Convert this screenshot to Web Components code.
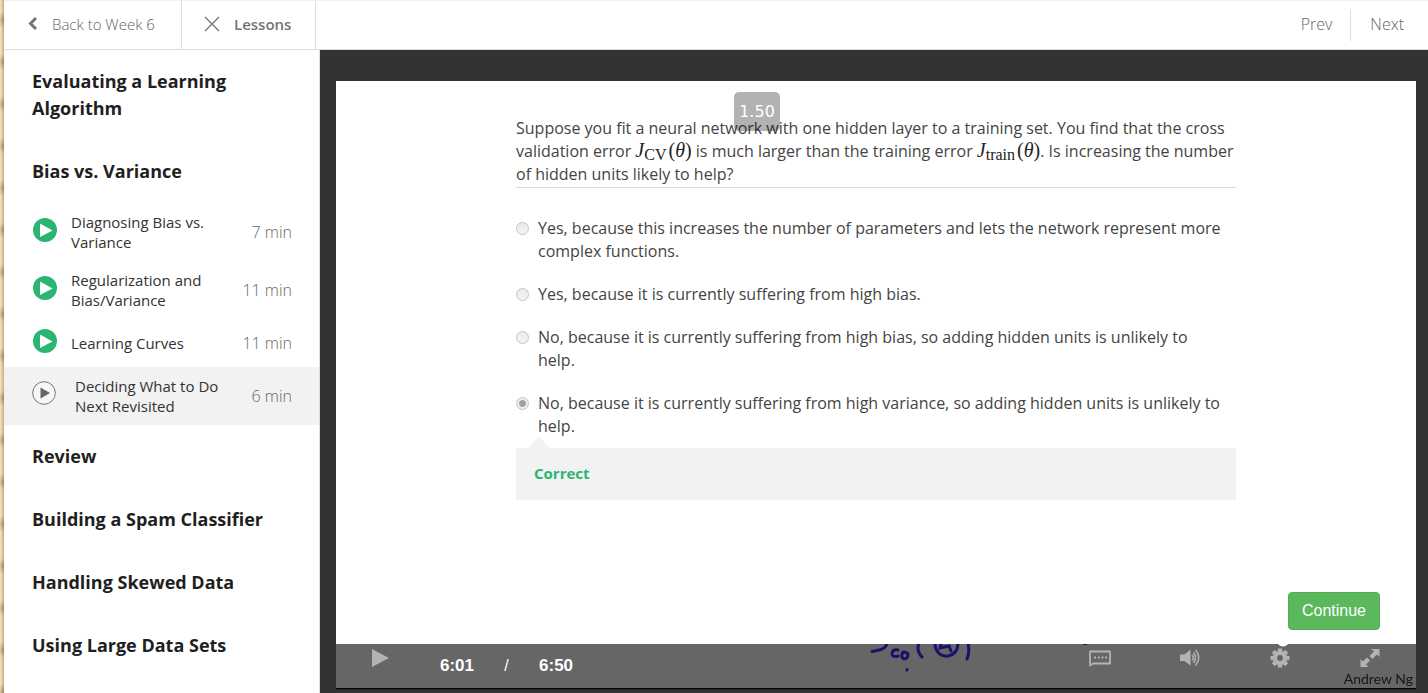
<!DOCTYPE html>
<html lang="en">
<head>
<meta charset="utf-8">
<title>Deciding What to Do Next Revisited</title>
<style>
html, body { margin: 0; height: 100%; }
body { font-family: "Open Sans", "Noto Sans", sans-serif; background: #fff; }
</style>
</head>
<body>
<course-page>
  <top-bar slot="header"></top-bar>
  <nav slot="sidebar" aria-label="Lessons">
    <lesson-section heading="Evaluating a Learning Algorithm"></lesson-section>
    <lesson-section heading="Bias vs. Variance">
      <lesson-item minutes="7 min">Diagnosing Bias vs. Variance</lesson-item>
      <lesson-item minutes="11 min">Regularization and Bias/Variance</lesson-item>
      <lesson-item minutes="11 min">Learning Curves</lesson-item>
      <lesson-item minutes="6 min" current>Deciding What to Do Next Revisited</lesson-item>
    </lesson-section>
    <lesson-section heading="Review"></lesson-section>
    <lesson-section heading="Building a Spam Classifier"></lesson-section>
    <lesson-section heading="Handling Skewed Data"></lesson-section>
    <lesson-section heading="Using Large Data Sets"></lesson-section>
  </nav>
  <video-stage slot="main">
    <quiz-panel></quiz-panel>
    <player-controls slot="controls"></player-controls>
  </video-stage>
</course-page>

<script>
const define = (name, html, setup) => {
  customElements.define(name, class extends HTMLElement {
    constructor() {
      super();
      this.attachShadow({ mode: "open" }).innerHTML = html;
    }
    connectedCallback() {
      if (setup) setup(this, this.shadowRoot);
    }
  });
};

define("course-page", `
<style>
  :host { display: grid; grid-template-columns: 4px 1fr; min-height: 100vh; }
  .edge {
    background:
      linear-gradient(90deg, rgba(255,240,215,.6), rgba(120,95,50,.35)),
      repeating-linear-gradient(180deg, #f2d8ae 0 12px, #a58e62 20px, #f0d5aa 28px 42px);
  }
  .page { display: flex; flex-direction: column; min-width: 0; }
  .body { flex: 1; display: grid; grid-template-columns: 316px minmax(0, 1fr); }
  .side { box-sizing: border-box; border-right: 1px solid #ddd; background: #fff; }
  .main { display: flex; background: #333; }
  ::slotted([slot=main]) { flex: 1; min-width: 0; }
</style>
<div class="edge"></div>
<div class="page">
  <slot name="header"></slot>
  <div class="body">
    <div class="side"><slot name="sidebar"></slot></div>
    <div class="main"><slot name="main"></slot></div>
  </div>
</div>`);

define("top-bar", `
<style>
  :host { display: flex; box-sizing: border-box; height: 50px; border-top: 1px solid #f0f0f0; border-bottom: 1px solid #ddd; background: #fff; font-size: 15px; line-height: 20px; }
  a, button { display: flex; align-items: center; box-sizing: border-box; padding: 0 0 2px; color: #666; text-decoration: none; font: inherit; font-weight: 300; }
  .back { width: 178px; padding-left: 24px; gap: 14px; border-right: 1px solid #ddd; }
  button { width: 134px; padding-left: 22px; gap: 14px; background: none; border: 0; border-right: 1px solid #ddd; color: #757575; font-weight: 600; }
  .pager { margin-left: auto; display: flex; align-items: center; padding-right: 24px; }
  .pager a { font-size: 16px; }
  .pager i { width: 1px; height: 32px; background: #ddd; margin: 0 19px 0 18px; }
  svg { display: block; }
</style>
<a class="back" href="#week6">
  <svg width="10" height="16" viewBox="0 0 10 16"><path d="M8 2 2.500 7.500 8 13" fill="none" stroke="#757575" stroke-width="3"/></svg>
  <span>Back to Week 6</span>
</a>
<button type="button">
  <svg width="16" height="16" viewBox="0 0 16 16"><path d="M1 1 15 15M15 1 1 15" fill="none" stroke="#757575" stroke-width="1.300"/></svg>
  <span>Lessons</span>
</button>
<div class="pager"><a href="#prev">Prev</a><i></i><a href="#next">Next</a></div>`);

define("lesson-section", `
<style>
  :host { display: block; }
  h2 { margin: 0; padding: 18px 40px 18px 28px; font-size: 18px; line-height: 27px; font-weight: 700; color: #1f1f1f; }
</style>
<h2></h2><slot></slot>`,
(host, root) => { root.querySelector("h2").textContent = host.getAttribute("heading"); });

define("lesson-item", `
<style>
  :host { display: block; }
  a { display: flex; align-items: center; min-height: 30px; padding: 9px 27px 9px 29px; font-size: 15px; line-height: 20px; color: #333; text-decoration: none; }
  :host([current]) a { background: #f2f2f2; padding-left: 28px; }
  svg { flex: none; width: 24px; height: 24px; padding-bottom: 4px; margin-right: 14px; }
  :host([current]) svg { margin-right: 19px; padding-bottom: 6px; }
  .title { width: 146px; }
  .time { margin-left: auto; color: #666; font-size: 16px; font-weight: 300; white-space: nowrap; }
  :host([current]) .done, :host(:not([current])) .now { display: none; }
</style>
<a href="#lesson">
  <svg class="done" viewBox="0 0 24 24"><circle cx="12" cy="12" r="12" fill="#2ab573"/><path d="M7 5.500V19L19.500 12.500z" fill="#fff"/></svg>
  <svg class="now" viewBox="0 0 24 24"><circle cx="12" cy="12" r="11.300" fill="#f7f7f7" stroke="#757575"/><path d="M8.500 6.500V17.500L18 12z" fill="#666"/></svg>
  <span class="title"><slot></slot></span>
  <span class="time"></span>
</a>`,
(host, root) => { root.querySelector(".time").textContent = host.getAttribute("minutes"); });

define("video-stage", `
<style>
  :host { display: flex; flex-direction: column; box-sizing: border-box; padding: 31px 12px 0 16px; }
  ::slotted(quiz-panel) { flex: 1; }
  .foot { height: 4px; border-top: 1px solid #000; background: linear-gradient(#2a2a2a, #383838); }
</style>
<slot></slot>
<slot name="controls"></slot>
<div class="foot"></div>`);

define("math-term", `
<style>
  :host { font-family: "Liberation Serif", serif; font-size: 20px; line-height: 0; color: #222; white-space: nowrap; }
  sub { margin-right: 2px; font-size: 16px; line-height: 0; vertical-align: -3px; }
</style>
<i>J</i><sub><slot></slot></sub>(<i>θ</i>)`);

define("quiz-panel", `
<style>
  :host { display: flex; flex-direction: column; position: relative; box-sizing: border-box; padding: 36px 36px 14px; background: #fff; color: #444; font-size: 16px; line-height: 23px; }
  form { display: contents; }
  fieldset { width: 100%; max-width: 720px; min-width: 0; margin: 0 auto; padding: 0; border: 0; }
  .question { padding: 0 0 1px; border-bottom: 1px solid #ddd; margin-bottom: 29px; }
  .options { display: flex; flex-direction: column; gap: 20px; }
  label { display: flex; gap: 9px; padding-right: 12px; }
  input { appearance: none; flex: none; box-sizing: border-box; width: 13px; height: 13px; margin: 5px 0 0; border: 1px solid #c4c4c4; border-radius: 50%; background: linear-gradient(#eaeaea, #f4f4f4); }
  input:checked { background: radial-gradient(circle, #a2a2a2 0 3px, #efefef 4px); }
  .feedback { position: relative; margin-top: 10px; padding: 14px 18px 15px; background: #f2f2f2; color: #2ab573; font-size: 15px; font-weight: 700; }
  .feedback::before { content: ""; position: absolute; left: 12px; top: -11px; border: 11px solid transparent; border-top: 0; border-bottom-color: #f2f2f2; }
  button { align-self: flex-end; margin-top: auto; height: 38px; padding: 0 13px; border: 1px solid #54ae54; border-radius: 4px; background: #5cb85c; color: #fff; font: 16px "Liberation Sans", sans-serif; }
  .speed { position: absolute; top: 11px; left: calc(50% - 142px); box-sizing: border-box; width: 46px; height: 39px; border-radius: 5px; background: rgba(0,0,0,.3); color: #fff; text-align: center; font: 16px/39px "DejaVu Sans", sans-serif; }
</style>
<form>
  <fieldset>
    <div class="question">Suppose you fit a neural network with one hidden layer to a training set. You find that the cross validation error <math-term>CV</math-term> is much larger than the training error <math-term>train</math-term>. Is increasing the number of hidden units likely to help?</div>
    <div class="options">
      <label><input type="radio" name="answer" disabled><span>Yes, because this increases the number of parameters and lets the network represent more complex functions.</span></label>
      <label><input type="radio" name="answer" disabled><span>Yes, because it is currently suffering from high bias.</span></label>
      <label><input type="radio" name="answer" disabled><span>No, because it is currently suffering from high bias, so adding hidden units is unlikely to help.</span></label>
      <label><input type="radio" name="answer" disabled checked><span>No, because it is currently suffering from high variance, so adding hidden units is unlikely to help.</span></label>
    </div>
    <div class="feedback">Correct</div>
  </fieldset>
  <button type="button">Continue</button>
</form>
<div class="speed">1.50</div>`);

define("player-controls", `
<style>
  :host { display: flex; position: relative; box-sizing: border-box; height: 44px; padding-right: 1px; background: #666; color: #fff; font: bold 17px/20px "Liberation Sans", sans-serif; overflow: hidden; }
  button { width: 90px; height: 28px; padding: 0; border: 0; background: none; display: flex; align-items: center; justify-content: center; }
  .time { display: flex; padding: 12px 0 0 14px; }
  .time i { width: 65px; text-align: center; font: 16px/20px "Liberation Sans", sans-serif; }
  .right { margin-left: auto; display: flex; }
  .ink { position: absolute; right: 0; top: 0; }
  .credit { position: absolute; right: 3px; bottom: 0; color: #161616; font: 14px/18px Lato, sans-serif; filter: blur(.4px); }
  svg { display: block; }
</style>
<svg class="ink" width="560" height="44" viewBox="856 644 560 44" fill="none" stroke="#19126a" stroke-width="3" stroke-linecap="round">
  <path d="M872 651.500C878 650 885 650 887 644M898 650Q893 649 892 653 892 658 898 656M903 652Q900 657 904 659 908 659 908 654 905 651 903 653M919 643Q916 651 922 657M935 643C935 652 941 657 948 656 954 655 958 651 958 643M941 644L940 648 949 646 951 651M968 643Q970 652 967 659M907 669.500v.500M1084 643.500h2"/>
  <circle cx="1283" cy="640" r="6.500" fill="#fff" stroke="none"/>
</svg>
<span class="credit">Andrew Ng</span>
<button type="button" aria-label="Play"><svg width="20" height="20" viewBox="0 0 20 20"><path d="M1 1V19L18 10z" fill="#b3b3b3"/></svg></button>
<div class="time"><span>6:01</span><i>/</i><span>6:50</span></div>
<div class="right">
  <button type="button" aria-label="Subtitles"><svg width="24" height="18" viewBox="0 0 24 18"><path d="M2 2.500H22V14.500H5L2 16.500z" fill="none" stroke="#b3b3b3" stroke-width="1.800" stroke-linejoin="round"/><path d="M6 8.500H19" stroke="#b3b3b3" stroke-width="2" stroke-dasharray="2 1.700"/></svg></button>
  <button type="button" aria-label="Volume"><svg width="22" height="20" viewBox="0 0 22 20"><path d="M1 6.500H5.500L11.500 1.500V17.500L5.500 13H1z" fill="#b3b3b3"/><path d="M13 7Q15.500 9.700 13 12.500M14.500 4.500Q18.500 9.700 14.500 15M16.500 2Q23 9.700 16.500 17.500" fill="none" stroke="#b3b3b3" stroke-width="1.500"/></svg></button>
  <button type="button" aria-label="Settings"><svg width="20" height="20" viewBox="-10 -10 20 20"><g fill="#b3b3b3"><path d="M-2-9.500H2L2.500-5H-2.500zM-2 9.500H2L2.500 5H-2.500zM-9.500-2V2L-5 2.500V-2.500zM9.500-2V2L5 2.500V-2.500z"/><path transform="rotate(45)" d="M-2-9.500H2L2.500-5H-2.500zM-2 9.500H2L2.500 5H-2.500zM-9.500-2V2L-5 2.500V-2.500zM9.500-2V2L5 2.500V-2.500z"/></g><circle r="4.900" fill="none" stroke="#b3b3b3" stroke-width="4"/></svg></button>
  <button type="button" aria-label="Full screen"><svg width="20" height="20" viewBox="0 0 20 20"><path d="M11 1H19.500V9L17 6.500 12.500 11 9.500 8 14 3.500zM.500 11 3 13.500 7 9.500 10 12.500 6 16.500 8.500 19H.500z" fill="#b3b3b3"/></svg></button>
</div>`);
</script>
</body>
</html>
